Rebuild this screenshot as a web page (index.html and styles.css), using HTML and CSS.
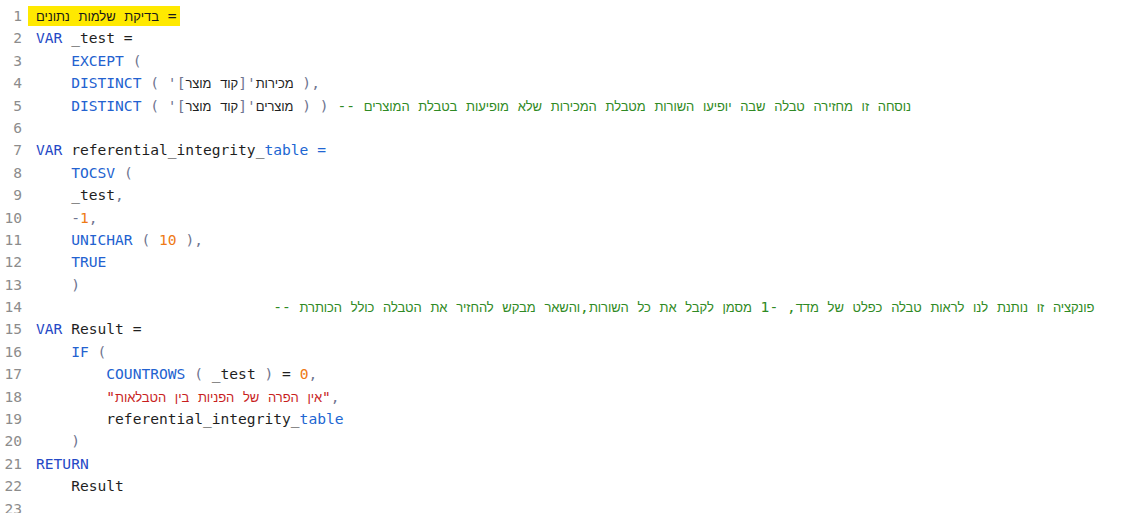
FILE: index.html
```html
<!DOCTYPE html>
<html lang="he">
<head>
<meta charset="utf-8">
<title>DAX</title>
<link rel="stylesheet" href="styles.css">
</head>
<body>
<div class="editor" dir="ltr">
<div class="line"><span class="ln">1</span><span class="code"><span class="hl"><span class="he">בדיקת שלמות נתונים</span> =</span></span></div>
<div class="line"><span class="ln">2</span><span class="code"><span class="kw">VAR</span> _test =</span></div>
<div class="line"><span class="ln">3</span><span class="code">    <span class="fn">EXCEPT</span> <span class="p">(</span></span></div>
<div class="line"><span class="ln">4</span><span class="code">    <span class="fn">DISTINCT</span> <span class="p">(</span> <span class="p">'</span><span class="he">מכירות</span><span class="p">'[</span><span class="he">קוד מוצר</span><span class="p">]</span> <span class="p">),</span></span></div>
<div class="line"><span class="ln">5</span><span class="code">    <span class="fn">DISTINCT</span> <span class="p">(</span> <span class="p">'</span><span class="he">מוצרים</span><span class="p">'[</span><span class="he">קוד מוצר</span><span class="p">]</span> <span class="p">)</span> <span class="p">)</span> <span class="cm iso">-- <span class="he">נוסחה זו מחזירה טבלה שבה יופיעו השורות מטבלת המכירות שלא מופיעות בטבלת המוצרים</span></span></span></div>
<div class="line"><span class="ln">6</span><span class="code"></span></div>
<div class="line"><span class="ln">7</span><span class="code"><span class="kw">VAR</span> referential_integrity_<span class="tb">table =</span></span></div>
<div class="line"><span class="ln">8</span><span class="code">    <span class="fn">TOCSV</span> <span class="p">(</span></span></div>
<div class="line"><span class="ln">9</span><span class="code">    _test<span class="p">,</span></span></div>
<div class="line"><span class="ln">10</span><span class="code">    <span class="p">-</span><span class="num">1</span><span class="p">,</span></span></div>
<div class="line"><span class="ln">11</span><span class="code">    <span class="fn">UNICHAR</span> <span class="p">(</span> <span class="num">10</span> <span class="p">),</span></span></div>
<div class="line"><span class="ln">12</span><span class="code">    <span class="fn">TRUE</span></span></div>
<div class="line"><span class="ln">13</span><span class="code">    <span class="p">)</span></span></div>
<div class="line"><span class="ln">14</span><span class="code">                           <span class="cm iso">-- <span class="he">פונקציה זו נותנת לנו לראות טבלה כפלט של מדד</span>, -1 <span class="he">מסמן לקבל את כל השורות</span>,<span class="he">והשאר מבקש להחזיר את הטבלה כולל הכותרת</span></span></span></div>
<div class="line"><span class="ln">15</span><span class="code"><span class="kw">VAR</span> Result =</span></div>
<div class="line"><span class="ln">16</span><span class="code">    <span class="fn">IF</span> <span class="p">(</span></span></div>
<div class="line"><span class="ln">17</span><span class="code">        <span class="fn">COUNTROWS</span> <span class="p">(</span> _test <span class="p">)</span> = <span class="num">0</span><span class="p">,</span></span></div>
<div class="line"><span class="ln">18</span><span class="code">        <span class="str">"<span class="he">אין הפרה של הפניות בין הטבלאות</span>"</span><span class="p">,</span></span></div>
<div class="line"><span class="ln">19</span><span class="code">        referential_integrity_<span class="tb">table</span></span></div>
<div class="line"><span class="ln">20</span><span class="code">    <span class="p">)</span></span></div>
<div class="line"><span class="ln">21</span><span class="code"><span class="kw">RETURN</span></span></div>
<div class="line"><span class="ln">22</span><span class="code">    Result</span></div>
<div class="line"><span class="ln">23</span><span class="code"></span></div>
</div>
</body>
</html>
```

FILE: styles.css
```css
html, body {
  margin: 0;
  padding: 0;
  background: #ffffff;
}

.editor {
  height: 513px;
  overflow: hidden;
  padding-top: 5px;
  box-sizing: border-box;
  font-family: "DejaVu Sans Mono", "Liberation Mono", monospace;
  font-size: 14.6px;
  line-height: 22.4px;
  color: #1f1f1f;
}

.line {
  display: flex;
  height: 22.4px;
  white-space: pre;
}

.ln {
  flex: none;
  width: 22px;
  text-align: right;
  color: #8c8c8c;
}

.code {
  margin-left: 14px;
}

.he {
  font-family: "Liberation Sans", "DejaVu Sans", sans-serif;
  font-size: 13px;
  letter-spacing: -0.1px;
  word-spacing: 5.3px;
}

.hl {
  display: inline-block;
  margin-left: -8px;
  padding: 0 4px 0 8px;
  line-height: 19px;
  background: #ffe900;
  color: #1a1a1a;
}

.kw { color: #2549c6; }
.fn { color: #2362d0; }
.tb { color: #2166d2; }
.p { color: #6f7590; }
.num { color: #ee7a16; }
.str { color: #c81e1e; }
.cm { color: #2f8a24; }
.iso { unicode-bidi: isolate; }
```
